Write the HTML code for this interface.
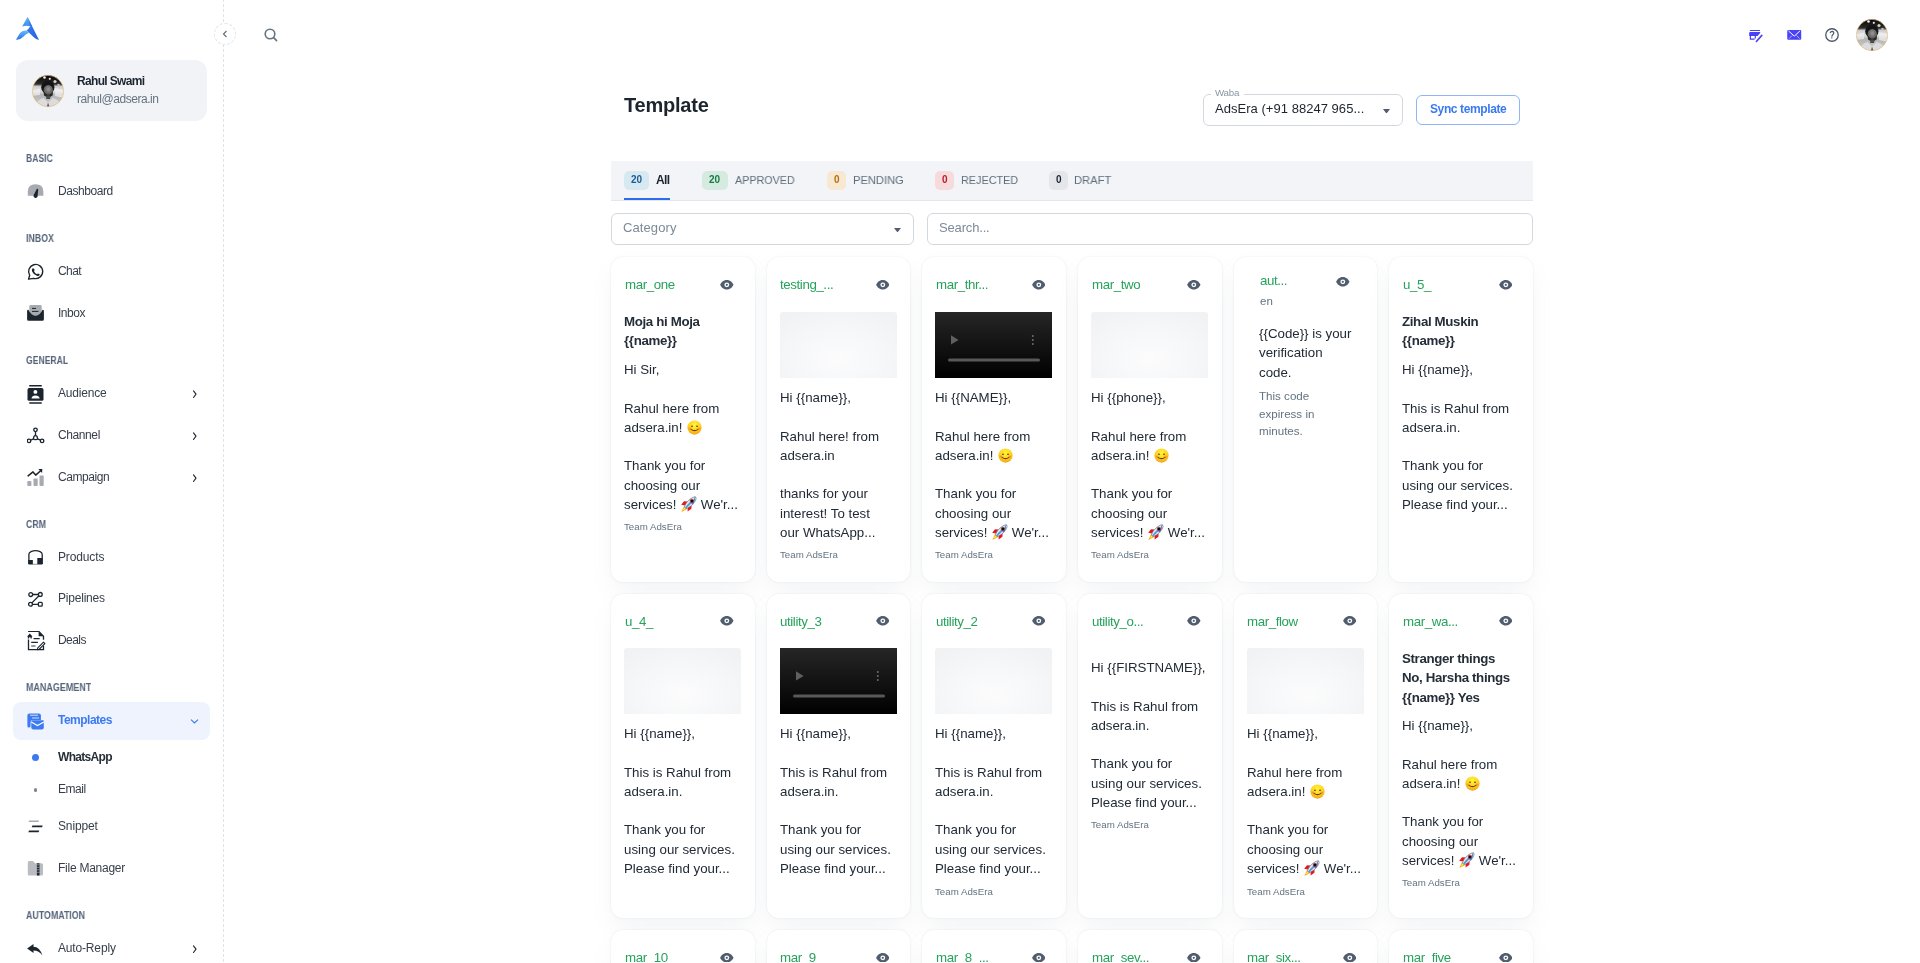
<!DOCTYPE html><html><head><meta charset="utf-8"><style>
*{box-sizing:border-box;margin:0;padding:0}
html,body{width:1920px;height:963px;overflow:hidden;background:#fff;font-family:"Liberation Sans",sans-serif;color:#1C252E}
.a{position:absolute}
.t{position:absolute;white-space:nowrap;will-change:transform}
.card{position:absolute;width:143.67px;background:#fff;border-radius:12px;box-shadow:0 0 2px 0 rgba(145,158,171,0.24),0 12px 24px -4px rgba(145,158,171,0.12)}
.card .t{position:absolute}
.body{position:absolute;white-space:pre;color:#262E38;will-change:transform}
.img{position:absolute;left:13px;width:117px;height:66px;background:radial-gradient(ellipse 70% 80% at 50% 70%,#FCFCFD 0%,#F6F7F8 55%,#F1F2F4 100%);border-radius:3px 3px 0 0}
.vid{position:absolute;left:13px;width:117px;height:66px;background:linear-gradient(#262626,#000)}
.em{display:inline-block;vertical-align:-3px}
svg{display:block}
.em{display:inline-block}
</style></head><body>
<div class="a" style="left:223px;top:-1px;width:1px;height:965px;background:repeating-linear-gradient(to bottom,#DFE3E8 0 3px,transparent 3px 5px)"></div>
<svg class="a" style="left:16px;top:17px" width="24" height="24" viewBox="0 0 24 24">
<defs>
<linearGradient id="lg1" x1="0" y1="0" x2="0" y2="1"><stop offset="0" stop-color="#5DB5F7"/><stop offset="1" stop-color="#3C8CF2"/></linearGradient>
<linearGradient id="lg2" x1="0" y1="0" x2="1" y2="1"><stop offset="0" stop-color="#3A7FEE"/><stop offset="1" stop-color="#2860E6"/></linearGradient>
<linearGradient id="lg3" x1="0" y1="0" x2="0" y2="1"><stop offset="0" stop-color="#66BDF9"/><stop offset="1" stop-color="#2D6EEB"/></linearGradient>
</defs>
<path d="M11.5 0 L6.2 9.5 Q9.5 8.2 14 9.2 L16.3 9.5 Z" fill="url(#lg1)"/>
<path d="M11.5 0 L23 23 Q20 22.5 17.5 20 L10.8 13.5 Q13 11.5 14.3 9.2 Z" fill="url(#lg2)"/>
<path d="M10.8 13.5 Q5.5 13 3 17.5 L0 22.8 Q4 23.2 7 20 Q9.5 17 13 15.8 Z" fill="url(#lg3)"/>
</svg>
<div class="a" style="left:16px;top:60px;width:191px;height:61px;border-radius:12px;background:#F1F3F6"></div>
<svg class="a" style="left:32px;top:75px" width="32" height="32" viewBox="0 0 32 32">
<defs><clipPath id="cav1"><circle cx="16" cy="16" r="15.7"/></clipPath>
<linearGradient id="avbg1" x1="0" y1="0" x2="0" y2="1"><stop offset="0" stop-color="#080808"/><stop offset="0.28" stop-color="#2a2a2a"/><stop offset="0.36" stop-color="#cfcfcf"/><stop offset="0.5" stop-color="#e2e2e2"/><stop offset="0.62" stop-color="#b4b4b4"/><stop offset="1" stop-color="#d0d0d0"/></linearGradient>
<radialGradient id="avf1" cx="0.5" cy="0.4" r="0.6"><stop offset="0" stop-color="#9a9a9a"/><stop offset="1" stop-color="#4a4a4a"/></radialGradient></defs>
<g clip-path="url(#cav1)">
<rect width="32" height="32" fill="url(#avbg1)"/>
<path d="M0 16 L8 13.5 L8 20 L0 21Z" fill="#f0f0f0" opacity="0.7"/><path d="M32 15 L23 13 L23 21 L32 23Z" fill="#f2f2f2" opacity="0.7"/>
<circle cx="12.5" cy="2.5" r="1.3" fill="#f4f4f4"/><circle cx="17.8" cy="3.8" r="1.1" fill="#e8e8e8"/><circle cx="23" cy="6.5" r="1.6" fill="#cfcfcf"/><circle cx="26.5" cy="10" r="1.3" fill="#bdbdbd"/>
<ellipse cx="15.8" cy="12.3" rx="6.6" ry="6.6" fill="#151515"/>
<ellipse cx="16.3" cy="15.3" rx="4.7" ry="5.4" fill="url(#avf1)"/>
<path d="M11.6 16.5 Q16.3 23 21 16.5 L20.6 20.5 Q16.3 24 12 20.5Z" fill="#262626"/>
<rect x="14.2" y="20.5" width="4" height="3.5" fill="#4a4a4a"/>
<path d="M2 32 Q5 25 11.5 23 L16 27.5 L20.8 23 Q27.5 25 31 32 Z" fill="#dcdcdc"/>
<path d="M16 27.5 L14.8 32 L17.6 32Z" fill="#5a5a5a"/>
</g>
<circle cx="16" cy="16" r="15.7" fill="none" stroke="#EDB870" stroke-width="0.6"/>
</svg>
<div class="t" style="left:77.30px;top:73.93px;font-size:12px;line-height:14px;color:#1C252E;font-weight:bold;letter-spacing:-0.670px;">Rahul Swami</div>
<div class="t" style="left:77.30px;top:91.77px;font-size:12px;line-height:14px;color:#637381;letter-spacing:-0.445px;">rahul@adsera.in</div>
<div class="t" style="left:25.80px;top:152.64px;font-size:10px;line-height:12px;color:#56657A;font-weight:bold;transform:scaleX(0.8578);transform-origin:0 0;">BASIC</div>
<div class="t" style="left:25.80px;top:232.89px;font-size:10px;line-height:12px;color:#56657A;font-weight:bold;transform:scaleX(0.8808);transform-origin:0 0;">INBOX</div>
<div class="t" style="left:25.80px;top:354.99px;font-size:10px;line-height:12px;color:#56657A;font-weight:bold;transform:scaleX(0.8630);transform-origin:0 0;">GENERAL</div>
<div class="t" style="left:25.80px;top:518.99px;font-size:10px;line-height:12px;color:#56657A;font-weight:bold;transform:scaleX(0.8782);transform-origin:0 0;">CRM</div>
<div class="t" style="left:25.80px;top:681.69px;font-size:10px;line-height:12px;color:#56657A;font-weight:bold;transform:scaleX(0.8959);transform-origin:0 0;">MANAGEMENT</div>
<div class="t" style="left:25.80px;top:909.99px;font-size:10px;line-height:12px;color:#56657A;font-weight:bold;transform:scaleX(0.8841);transform-origin:0 0;">AUTOMATION</div>
<div class="t" style="left:57.80px;top:183.68px;font-size:12px;line-height:14px;color:#363F4A;letter-spacing:-0.426px;">Dashboard</div>
<div class="t" style="left:57.80px;top:264.18px;font-size:12px;line-height:14px;color:#363F4A;letter-spacing:-0.550px;">Chat</div>
<div class="t" style="left:57.80px;top:305.73px;font-size:12px;line-height:14px;color:#363F4A;letter-spacing:-0.492px;">Inbox</div>
<div class="t" style="left:57.80px;top:385.98px;font-size:12px;line-height:14px;color:#363F4A;letter-spacing:-0.206px;">Audience</div>
<div class="t" style="left:57.80px;top:427.83px;font-size:12px;line-height:14px;color:#363F4A;letter-spacing:-0.400px;">Channel</div>
<div class="t" style="left:57.80px;top:469.98px;font-size:12px;line-height:14px;color:#363F4A;letter-spacing:-0.427px;">Campaign</div>
<div class="t" style="left:57.80px;top:549.98px;font-size:12px;line-height:14px;color:#363F4A;letter-spacing:-0.139px;">Products</div>
<div class="t" style="left:57.80px;top:590.98px;font-size:12px;line-height:14px;color:#363F4A;letter-spacing:-0.211px;">Pipelines</div>
<div class="t" style="left:57.80px;top:632.98px;font-size:12px;line-height:14px;color:#363F4A;letter-spacing:-0.572px;">Deals</div>
<div class="t" style="left:57.80px;top:818.88px;font-size:12px;line-height:14px;color:#363F4A;letter-spacing:-0.135px;">Snippet</div>
<div class="t" style="left:57.80px;top:861.18px;font-size:12px;line-height:14px;color:#363F4A;letter-spacing:-0.256px;">File Manager</div>
<div class="t" style="left:57.80px;top:941.18px;font-size:12px;line-height:14px;color:#363F4A;letter-spacing:-0.163px;">Auto-Reply</div>
<div class="t" style="left:57.80px;top:781.88px;font-size:12px;line-height:14px;color:#363F4A;letter-spacing:-0.475px;">Email</div>
<div class="a" style="left:13px;top:702px;width:197px;height:38px;border-radius:8px;background:#EEF3FD"></div>
<div class="t" style="left:57.80px;top:713.03px;font-size:12px;line-height:14px;color:#3B7AF0;font-weight:bold;letter-spacing:-0.509px;">Templates</div>
<div class="t" style="left:57.80px;top:750.13px;font-size:12px;line-height:14px;color:#262F39;font-weight:bold;letter-spacing:-0.691px;">WhatsApp</div>
<div class="a" style="left:31.9px;top:753.9px;width:7px;height:7px;border-radius:50%;background:#3B7AF0"></div>
<div class="a" style="left:33.6px;top:788.1px;width:3.6px;height:3.6px;border-radius:50%;background:#7A8593"></div>

<svg class="a" style="left:27px;top:183px" width="18" height="16" viewBox="0 0 18 16"><path d="M0.8 12.8 V8.4 Q0.8 1.2 8.55 1.2 Q16.35 1.2 16.35 8.4 V12.8 Z" fill="#A7AAB0"/><path d="M9.9 5.8 L11.2 6.1 L10.7 12.6 A2.1 2.1 0 1 1 6.7 12 Z" fill="#1C252E"/></svg>
<svg class="a" style="left:27px;top:263px" width="18" height="18" viewBox="0 0 18 18"><path d="M2.7 12.3 L1.5 16.2 L6.7 15.3 A7.05 7.05 0 1 0 2.7 12.3 Z" fill="none" stroke="#1C252E" stroke-width="1.35" stroke-linejoin="round"/><path d="M5.3 5.6 Q4.5 6.5 5.1 8.4 Q6.4 11.7 10.3 12.9 Q12 13.3 12.6 12.1 L12.5 11.1 L10.9 10.4 L10.1 11.2 Q7.8 10.4 6.9 8.1 L7.7 7.2 L7 5.5 Z" fill="#1C252E"/></svg>
<svg class="a" style="left:27px;top:305px" width="18" height="17" viewBox="0 0 18 17"><path d="M3.6 0.1 H13.4 Q14.7 0.1 14.7 1.4 V10 H2.3 V1.4 Q2.3 0.1 3.6 0.1Z" fill="#A7AAB0"/><rect x="5" y="2.9" width="4" height="1" fill="#1C252E"/><rect x="5" y="5.9" width="6.5" height="1" fill="#1C252E"/><path d="M0.1 6 Q0.1 4.7 1.4 4.7 Q4.2 10.6 8.5 10.6 Q12.8 10.6 15.6 4.7 Q16.9 4.7 16.9 6 V14.3 Q16.9 15.8 15.4 15.8 H1.6 Q0.1 15.8 0.1 14.3 Z" fill="#1C252E"/></svg>
<svg class="a" style="left:27px;top:384px" width="18" height="21" viewBox="0 0 18 21"><rect x="2.1" y="1.1" width="12.8" height="1.4" rx="0.6" fill="#1C252E"/><rect x="2.1" y="18.2" width="12.8" height="1.5" rx="0.6" fill="#1C252E"/><rect x="0.5" y="4.1" width="16" height="12.7" rx="1.6" fill="#1C252E"/><circle cx="8.4" cy="7.9" r="1.95" fill="#fff"/><path d="M4.5 14.5 Q4.9 11.6 8.4 11.6 Q12.2 11.6 12.7 14.5Z" fill="#fff"/></svg>
<svg class="a" style="left:27px;top:427px" width="18" height="17" viewBox="0 0 18 17"><g fill="none" stroke="#1C252E" stroke-width="1.35"><circle cx="8.5" cy="2.8" r="1.75"/><circle cx="2" cy="13.9" r="1.75"/><circle cx="15.1" cy="13.9" r="1.75"/><path d="M8.5 4.6 V8.6 M3.6 13.1 L6.6 11.9 M13.5 13.1 L10.4 11.9"/><path d="M8.5 8.6 Q7.3 8.6 6.9 9.6 L6.5 11.4 Q6.5 12.6 8.5 12.6 Q10.5 12.6 10.5 11.4 L10.1 9.6 Q9.7 8.6 8.5 8.6Z"/></g></svg>
<svg class="a" style="left:27px;top:468px" width="18" height="19" viewBox="0 0 18 19"><rect x="0.3" y="13" width="4.1" height="5" rx="0.9" fill="#A7AAB0"/><rect x="6.5" y="10.5" width="4.2" height="7.5" rx="0.9" fill="#A7AAB0"/><rect x="12.5" y="7.5" width="4.2" height="10.5" rx="0.9" fill="#A7AAB0"/><path d="M1.1 7.9 L6 3.9 L8.7 7.1 L14.2 2.2" fill="none" stroke="#1C252E" stroke-width="1.5" stroke-linejoin="round" stroke-linecap="round"/><path d="M11.3 1.1 L15.3 1 L15.1 4.9Z" fill="#1C252E"/></svg>
<svg class="a" style="left:27px;top:549px" width="18" height="17" viewBox="0 0 18 17"><path d="M1.9 15 V5.2 Q1.9 3.6 4 2.6 Q8.5 0.5 13.1 2.6 Q15.2 3.6 15.2 5.2 V15" fill="none" stroke="#1C252E" stroke-width="1.3"/><rect x="1.25" y="11" width="4.6" height="4.2" fill="#1C252E"/><rect x="10.3" y="9" width="5.2" height="6.2" fill="#1C252E"/><path d="M1.8 15.3 H15.2" stroke="#1C252E" stroke-width="0.8" opacity="0.6"/></svg>
<svg class="a" style="left:27px;top:590px" width="18" height="18" viewBox="0 0 18 18"><g fill="none" stroke="#1C252E" stroke-width="1.3"><circle cx="3.7" cy="4.6" r="1.9"/><circle cx="13.3" cy="4.4" r="1.9"/><circle cx="3.5" cy="14.3" r="1.9"/><rect x="11.4" y="12.4" width="3.8" height="3.8" rx="0.9"/><path d="M5.6 4.5 H11.4 M12 5.8 L4.9 12.9 M5.4 14.3 H11.4"/></g></svg>
<svg class="a" style="left:27px;top:631px" width="19" height="20" viewBox="0 0 19 20"><path d="M1.5 8.6 V18.6 H16.5 V15 M16.5 8.8 V5.2 L11.8 0.4 H1.1" fill="none" stroke="#1C252E" stroke-width="1.3"/><path d="M11.6 0.4 L16.6 5.3 L11.6 5.3Z" fill="#1C252E"/><path d="M0.1 5.6 L2.8 2.5 L5.5 5.6 H4.8 V7.6 H3.5 V6.2 H2.1 V7.6 H0.8 V5.6Z" fill="#1C252E"/><path d="M6.6 7.6 H12.7 M4.2 11.4 H10.9" stroke="#1C252E" stroke-width="1.2"/><path d="M4.2 15 H8.5" stroke="#6A7078" stroke-width="1.4"/><path d="M10.6 17.2 L16.5 11.2 L17.9 12.6 L12 18.5 L10.4 18.7 Z" fill="none" stroke="#1C252E" stroke-width="1.1" stroke-linejoin="round"/></svg>
<svg class="a" style="left:27px;top:713px" width="18" height="18" viewBox="0 0 18 18"><path d="M0.4 2.4 Q0.4 0.4 2.4 0.4 H11.9 Q13.9 0.4 13.9 2.4 V7 H5.3 Q3.6 7 3.6 8.7 V13 Q3.6 14.6 2 14.6 Q0.4 14.6 0.4 13 Z" fill="#3D7AF0"/><path d="M3 2.2 H11 M5 5 H12" stroke="#fff" stroke-width="0.9" opacity="0.85"/><path d="M4.3 8 Q4.3 7.2 5.1 7.2 H16 Q16.8 7.2 16.8 8 V14.5 Q16.8 16.5 14.8 16.5 H6.3 Q4.3 16.5 4.3 14.5 Z" fill="#3D7AF0"/><path d="M4.3 9 L10.5 12.6 L16.8 9" fill="none" stroke="#fff" stroke-width="1.1"/></svg>
<svg class="a" style="left:190px;top:718px" width="9" height="7" viewBox="0 0 9 7"><path d="M1 1.7 L4.5 5 L8 1.7" fill="none" stroke="#3B7AF0" stroke-width="1.15"/></svg>
<svg class="a" style="left:27px;top:818px" width="18" height="16" viewBox="0 0 18 16"><path d="M2.2 2.5 H12.1 L11.4 4.1 H1.5Z" fill="#A7AAB0"/><path d="M5.4 7.5 H15.7 L15 9.3 H4.7Z" fill="#1C252E"/><path d="M2 12.4 H12.3 L11.6 14.2 H1.3Z" fill="#1C252E"/></svg>
<svg class="a" style="left:27px;top:860px" width="18" height="17" viewBox="0 0 18 17"><path d="M0.8 2.5 Q0.8 1 2.3 1 H6 L8 3.3 H14.5 Q16 3.3 16 4.8 V14 Q16 15.5 14.5 15.5 H2.3 Q0.8 15.5 0.8 14Z" fill="#B9BCC1"/><rect x="9.9" y="3.3" width="2.6" height="12.2" fill="#1C252E"/><path d="M9.9 4.8 H12.5 M9.9 7.3 H12.5 M9.9 9.8 H12.5 M9.9 12.3 H12.5" stroke="#B9BCC1" stroke-width="0.7"/></svg>
<svg class="a" style="left:27px;top:940px" width="18" height="17" viewBox="0 0 18 17"><path d="M0.1 8.4 L6.5 3.9 V6.8 Q12.8 7 15.4 15.5 Q12 10.6 6.5 10.6 V12.9 Z" fill="#1C252E"/></svg>

<svg class="a" style="left:190px;top:389px" width="10" height="10" viewBox="0 0 10 10"><path d="M3.5 1.9 L6 5.2 L3.5 8.5" fill="none" stroke="#1C252E" stroke-width="1.1" stroke-linecap="round" stroke-linejoin="round"/></svg>
<svg class="a" style="left:190px;top:431px" width="10" height="10" viewBox="0 0 10 10"><path d="M3.5 1.9 L6 5.2 L3.5 8.5" fill="none" stroke="#1C252E" stroke-width="1.1" stroke-linecap="round" stroke-linejoin="round"/></svg>
<svg class="a" style="left:190px;top:473px" width="10" height="10" viewBox="0 0 10 10"><path d="M3.5 1.9 L6 5.2 L3.5 8.5" fill="none" stroke="#1C252E" stroke-width="1.1" stroke-linecap="round" stroke-linejoin="round"/></svg>
<svg class="a" style="left:190px;top:944px" width="10" height="10" viewBox="0 0 10 10"><path d="M3.5 1.9 L6 5.2 L3.5 8.5" fill="none" stroke="#1C252E" stroke-width="1.1" stroke-linecap="round" stroke-linejoin="round"/></svg>
<div class="a" style="left:214px;top:23px;width:22px;height:22px;border-radius:50%;border:1px dashed #E3E6EA;background:#fff"></div>
<svg class="a" style="left:221px;top:30px" width="8" height="8" viewBox="0 0 8 8"><path d="M5.5 1 L2.5 4 L5.5 7" fill="none" stroke="#637381" stroke-width="1.2"/></svg>
<svg class="a" style="left:264px;top:28px" width="14" height="14" viewBox="0 0 14 14"><circle cx="6" cy="6" r="4.8" fill="none" stroke="#637381" stroke-width="1.6"/><path d="M9.6 9.6 L12.6 12.6" stroke="#637381" stroke-width="1.6" stroke-linecap="round"/></svg>
<svg class="a" style="left:1748px;top:28px" width="16" height="15" viewBox="0 0 16 15"><rect x="1.8" y="1.9" width="10.3" height="1.1" rx="0.5" fill="#4841F6"/><path d="M2.2 4 H11.6 Q12.7 4 12.2 5 L9.6 7.9 H1.2 V5 Q1.2 4 2.2 4Z" fill="#4841F6"/><path d="M2.4 7.8 V11.2 H6.6 M7.3 7.8 V10.4" fill="none" stroke="#4841F6" stroke-width="1.2"/><path d="M8.4 13.5 L13.8 7.4" stroke="#4841F6" stroke-width="1.6" stroke-linecap="round"/></svg>
<svg class="a" style="left:1787px;top:29px" width="15" height="12" viewBox="0 0 15 12"><rect x="0.25" y="0.9" width="13.95" height="9.85" rx="1.1" fill="#4841F6"/><path d="M1.5 2 L7.3 7.1 L12.9 2" fill="none" stroke="#fff" stroke-width="1"/><path d="M2 9.6 L5.2 6.4 M12.6 9.6 L9.4 6.4" stroke="#fff" stroke-width="0.75" opacity="0.8"/></svg>
<svg class="a" style="left:1824px;top:28px" width="16" height="15" viewBox="0 0 16 15"><circle cx="8" cy="7" r="6.25" fill="none" stroke="#4A5866" stroke-width="1.3"/><path d="M6.3 4.7 Q6.6 3.3 8.2 3.3 Q9.8 3.4 9.8 4.9 Q9.8 6 8.4 7 L7.9 8.2" fill="none" stroke="#4A5866" stroke-width="1.2" stroke-linecap="round"/><circle cx="7.8" cy="9.9" r="0.7" fill="#4A5866"/></svg>
<svg class="a" style="left:1856px;top:19px" width="32" height="32" viewBox="0 0 32 32">
<defs><clipPath id="cav2"><circle cx="16" cy="16" r="15.7"/></clipPath>
<linearGradient id="avbg2" x1="0" y1="0" x2="0" y2="1"><stop offset="0" stop-color="#080808"/><stop offset="0.28" stop-color="#2a2a2a"/><stop offset="0.36" stop-color="#cfcfcf"/><stop offset="0.5" stop-color="#e2e2e2"/><stop offset="0.62" stop-color="#b4b4b4"/><stop offset="1" stop-color="#d0d0d0"/></linearGradient>
<radialGradient id="avf2" cx="0.5" cy="0.4" r="0.6"><stop offset="0" stop-color="#9a9a9a"/><stop offset="1" stop-color="#4a4a4a"/></radialGradient></defs>
<g clip-path="url(#cav2)">
<rect width="32" height="32" fill="url(#avbg2)"/>
<path d="M0 16 L8 13.5 L8 20 L0 21Z" fill="#f0f0f0" opacity="0.7"/><path d="M32 15 L23 13 L23 21 L32 23Z" fill="#f2f2f2" opacity="0.7"/>
<circle cx="12.5" cy="2.5" r="1.3" fill="#f4f4f4"/><circle cx="17.8" cy="3.8" r="1.1" fill="#e8e8e8"/><circle cx="23" cy="6.5" r="1.6" fill="#cfcfcf"/><circle cx="26.5" cy="10" r="1.3" fill="#bdbdbd"/>
<ellipse cx="15.8" cy="12.3" rx="6.6" ry="6.6" fill="#151515"/>
<ellipse cx="16.3" cy="15.3" rx="4.7" ry="5.4" fill="url(#avf2)"/>
<path d="M11.6 16.5 Q16.3 23 21 16.5 L20.6 20.5 Q16.3 24 12 20.5Z" fill="#262626"/>
<rect x="14.2" y="20.5" width="4" height="3.5" fill="#4a4a4a"/>
<path d="M2 32 Q5 25 11.5 23 L16 27.5 L20.8 23 Q27.5 25 31 32 Z" fill="#dcdcdc"/>
<path d="M16 27.5 L14.8 32 L17.6 32Z" fill="#5a5a5a"/>
</g>
<circle cx="16" cy="16" r="15.7" fill="none" stroke="#EDB870" stroke-width="0.6"/>
</svg>
<div class="t" style="left:624.25px;top:92.97px;font-size:20px;line-height:24px;color:#1C252E;font-weight:bold;letter-spacing:-0.214px;">Template</div>
<div class="a" style="left:1203px;top:94px;width:200px;height:31.5px;border:1px solid #D3D8DE;border-radius:6px"></div>
<div class="a" style="left:1211px;top:90px;width:33px;height:8px;background:#fff"></div>
<div class="t" style="left:1214.60px;top:87.44px;font-size:9.75px;line-height:12px;color:#8A96A3;letter-spacing:-0.244px;">Waba</div>
<div class="t" style="left:1215.10px;top:101.33px;font-size:13px;line-height:16px;color:#1C252E;letter-spacing:0.034px;">AdsEra (+91 88247 965...</div>
<svg class="a" style="left:1383px;top:108.5px" width="7" height="4.6" viewBox="0 0 7 4.6"><path d="M0 0 L7 0 L3.5 4.6Z" fill="#4F5D6E"/></svg>
<div class="a" style="left:1416px;top:95px;width:104px;height:29.5px;border:1px solid #8FB5F6;border-radius:6px"></div>
<div class="t" style="left:1429.75px;top:101.88px;font-size:12px;line-height:14px;color:#3B7AF0;font-weight:bold;letter-spacing:-0.384px;">Sync template</div>
<div class="a" style="left:611px;top:161px;width:922px;height:39.5px;background:#F3F4F7"></div>
<div class="a" style="left:611px;top:200px;width:922px;height:1px;background:#E3E6EA"></div>
<div class="a" style="left:624px;top:198px;width:46px;height:2px;background:#2F6BEF"></div>
<div class="a" style="left:624.2px;top:171px;width:24.7px;height:19px;border-radius:5px;background:#D6E9F1"></div>
<div class="t" style="left:630.99px;top:173.69px;font-size:10px;line-height:12px;color:#1F5B97;font-weight:bold;">20</div>
<div class="t" style="left:656.00px;top:172.98px;font-size:12px;line-height:14px;color:#1C252E;font-weight:bold;letter-spacing:-0.665px;">All</div>
<div class="a" style="left:702.3px;top:171px;width:25.5px;height:19px;border-radius:5px;background:#D5EBDF"></div>
<div class="t" style="left:709.49px;top:173.69px;font-size:10px;line-height:12px;color:#1A7A4A;font-weight:bold;">20</div>
<div class="t" style="left:734.60px;top:173.28px;font-size:11.6px;line-height:14px;color:#5F6E7D;transform:scaleX(0.9276);transform-origin:0 0;">APPROVED</div>
<div class="a" style="left:827.3px;top:171px;width:18.6px;height:19px;border-radius:5px;background:#F7E8D2"></div>
<div class="t" style="left:833.82px;top:173.69px;font-size:10px;line-height:12px;color:#B76E12;font-weight:bold;">0</div>
<div class="t" style="left:852.50px;top:173.28px;font-size:11.6px;line-height:14px;color:#5F6E7D;transform:scaleX(0.9609);transform-origin:0 0;">PENDING</div>
<div class="a" style="left:935.0px;top:171px;width:18.9px;height:19px;border-radius:5px;background:#F7DADC"></div>
<div class="t" style="left:941.68px;top:173.69px;font-size:10px;line-height:12px;color:#B71D2F;font-weight:bold;">0</div>
<div class="t" style="left:961.40px;top:173.28px;font-size:11.6px;line-height:14px;color:#5F6E7D;transform:scaleX(0.9344);transform-origin:0 0;">REJECTED</div>
<div class="a" style="left:1049.25px;top:171px;width:18.5px;height:19px;border-radius:5px;background:#E4E6EA"></div>
<div class="t" style="left:1055.70px;top:173.69px;font-size:10px;line-height:12px;color:#1C252E;font-weight:bold;">0</div>
<div class="t" style="left:1074.40px;top:173.28px;font-size:11.6px;line-height:14px;color:#5F6E7D;transform:scaleX(0.9662);transform-origin:0 0;">DRAFT</div>
<div class="a" style="left:611px;top:213px;width:303px;height:32px;border:1px solid #D3D8DE;border-radius:6px"></div>
<div class="t" style="left:623.00px;top:220.28px;font-size:13px;line-height:16px;color:#7D8A98;letter-spacing:0.093px;">Category</div>
<svg class="a" style="left:894px;top:227.5px" width="7" height="4.4" viewBox="0 0 7 4.4"><path d="M0 0 L7 0 L3.5 4.4Z" fill="#4F5D6E"/></svg>
<div class="a" style="left:927px;top:213px;width:606px;height:32px;border:1px solid #D3D8DE;border-radius:6px"></div>
<div class="t" style="left:938.90px;top:220.33px;font-size:13px;line-height:16px;color:#7D8A98;letter-spacing:-0.167px;">Search...</div>
<div class="card" style="left:611.00px;top:257.3px;height:324.6px"><div class="t" style="left:13.50px;top:19.92px;font-size:13.3px;line-height:16px;color:#26A35B;letter-spacing:-0.4px">mar_one</div><svg class="a" style="left:109.20px;top:22.70px" width="13.6" height="9.7" viewBox="0 0 14 10"><path d="M7 0.1 C3.4 0.1 1 2.9 0.1 5 C1 7.1 3.4 9.9 7 9.9 C10.6 9.9 13 7.1 13.9 5 C13 2.9 10.6 0.1 7 0.1Z" fill="#4F5D6E"/><circle cx="7" cy="5" r="2.5" fill="#fff"/><circle cx="7" cy="5" r="1.15" fill="#4F5D6E"/></svg><div class="body" style="left:12.7px;top:54.86px;font-size:13.3px;line-height:19.25px;color:#252E38;font-weight:bold;letter-spacing:-0.35px;">Moja hi Moja
{{name}}</div><div class="body" style="left:13.0px;top:102.71px;font-size:13.3px;line-height:19.25px;color:#212B36;">Hi Sir,

Rahul here from
adsera.in! <svg class="em" style="vertical-align:-3.1px;margin-left:0.5px" width="15" height="15" viewBox="0 0 16 16"><defs><radialGradient id="SM1" cx="0.5" cy="0.3" r="0.75"><stop offset="0" stop-color="#FFF53A"/><stop offset="0.55" stop-color="#FDD21F"/><stop offset="1" stop-color="#F39A12"/></radialGradient></defs><circle cx="8" cy="8" r="7.6" fill="url(#SM1)"/><ellipse cx="5.3" cy="6.6" rx="1.05" ry="0.8" fill="#6E3A0C"/><ellipse cx="10.7" cy="6.6" rx="1.05" ry="0.8" fill="#6E3A0C"/><path d="M4.3 10 Q8 12.8 11.7 10" fill="none" stroke="#6E3A0C" stroke-width="1.2" stroke-linecap="round"/><ellipse cx="3.2" cy="9" rx="1.6" ry="1.1" fill="#F57A1F" opacity="0.6"/><ellipse cx="12.8" cy="9" rx="1.6" ry="1.1" fill="#F57A1F" opacity="0.6"/></svg>

Thank you for
choosing our
services! <svg class="em" style="vertical-align:-3.6px;margin-left:0.5px;margin-right:0.5px" width="16" height="16" viewBox="0 0 16 16"><path d="M0.3 16 L3.2 9.8 L6.6 12.8Z" fill="#F7A21A"/><path d="M1.6 14.6 L3.4 11 L5.2 12.6Z" fill="#FFF23A"/><path d="M0.2 8.8 L3 5.2 L6.8 5.4 L4.2 9.4Z" fill="#E8141E"/><path d="M6.6 15.4 L10.4 12.8 L10.6 9.2 L6.6 11.8Z" fill="#E8141E"/><ellipse cx="9.4" cy="6.6" rx="7.6" ry="2.8" transform="rotate(-45 9.4 6.6)" fill="#E4ECF2" stroke="#5E6B78" stroke-width="0.6"/><path d="M15.8 0.3 Q15.9 4.5 11.6 9 L13.5 10.5 Q16.5 6 15.8 0.3Z" fill="#3C7FD0" transform="translate(-1.6 -1.8)"/><path d="M4.3 11.6 Q5.5 9 9.6 5.2 L11 6.6 Q7.5 10.6 5.1 12.4Z" fill="#3F86D6" opacity="0.85"/><circle cx="10.9" cy="4.9" r="1.75" fill="#0D0D12" stroke="#C9303A" stroke-width="0.7"/></svg> We'r...</div><div class="t" style="left:13.10px;top:264.19px;font-size:9.7px;line-height:12px;color:#637381;transform:scaleX(1.0032);transform-origin:0 0;">Team AdsEra</div></div>
<div class="card" style="left:766.67px;top:257.3px;height:324.6px"><div class="t" style="left:13.50px;top:19.92px;font-size:13.3px;line-height:16px;color:#26A35B;letter-spacing:-0.4px">testing_...</div><svg class="a" style="left:109.20px;top:22.70px" width="13.6" height="9.7" viewBox="0 0 14 10"><path d="M7 0.1 C3.4 0.1 1 2.9 0.1 5 C1 7.1 3.4 9.9 7 9.9 C10.6 9.9 13 7.1 13.9 5 C13 2.9 10.6 0.1 7 0.1Z" fill="#4F5D6E"/><circle cx="7" cy="5" r="2.5" fill="#fff"/><circle cx="7" cy="5" r="1.15" fill="#4F5D6E"/></svg><div class="img" style="top:54.8px"></div><div class="body" style="left:13.0px;top:130.46px;font-size:13.3px;line-height:19.25px;color:#212B36;">Hi {{name}},

Rahul here! from
adsera.in

thanks for your
interest! To test
our WhatsApp...</div><div class="t" style="left:13.10px;top:291.94px;font-size:9.7px;line-height:12px;color:#637381;transform:scaleX(1.0032);transform-origin:0 0;">Team AdsEra</div></div>
<div class="card" style="left:922.34px;top:257.3px;height:324.6px"><div class="t" style="left:13.50px;top:19.92px;font-size:13.3px;line-height:16px;color:#26A35B;letter-spacing:-0.4px">mar_thr...</div><svg class="a" style="left:109.20px;top:22.70px" width="13.6" height="9.7" viewBox="0 0 14 10"><path d="M7 0.1 C3.4 0.1 1 2.9 0.1 5 C1 7.1 3.4 9.9 7 9.9 C10.6 9.9 13 7.1 13.9 5 C13 2.9 10.6 0.1 7 0.1Z" fill="#4F5D6E"/><circle cx="7" cy="5" r="2.5" fill="#fff"/><circle cx="7" cy="5" r="1.15" fill="#4F5D6E"/></svg><div class="vid" style="top:54.8px"><svg width="117" height="66" viewBox="0 0 117 66"><path d="M16 23.3 L23.5 28 L16 32.6Z" fill="#606060"/><circle cx="97.8" cy="24" r="0.95" fill="#707070"/><circle cx="97.8" cy="28" r="0.95" fill="#707070"/><circle cx="97.8" cy="32" r="0.95" fill="#707070"/><rect x="13" y="46.5" width="92" height="3" rx="1.5" fill="#585858"/></svg></div><div class="body" style="left:13.0px;top:130.46px;font-size:13.3px;line-height:19.25px;color:#212B36;">Hi {{NAME}},

Rahul here from
adsera.in! <svg class="em" style="vertical-align:-3.1px;margin-left:0.5px" width="15" height="15" viewBox="0 0 16 16"><defs><radialGradient id="SM2" cx="0.5" cy="0.3" r="0.75"><stop offset="0" stop-color="#FFF53A"/><stop offset="0.55" stop-color="#FDD21F"/><stop offset="1" stop-color="#F39A12"/></radialGradient></defs><circle cx="8" cy="8" r="7.6" fill="url(#SM2)"/><ellipse cx="5.3" cy="6.6" rx="1.05" ry="0.8" fill="#6E3A0C"/><ellipse cx="10.7" cy="6.6" rx="1.05" ry="0.8" fill="#6E3A0C"/><path d="M4.3 10 Q8 12.8 11.7 10" fill="none" stroke="#6E3A0C" stroke-width="1.2" stroke-linecap="round"/><ellipse cx="3.2" cy="9" rx="1.6" ry="1.1" fill="#F57A1F" opacity="0.6"/><ellipse cx="12.8" cy="9" rx="1.6" ry="1.1" fill="#F57A1F" opacity="0.6"/></svg>

Thank you for
choosing our
services! <svg class="em" style="vertical-align:-3.6px;margin-left:0.5px;margin-right:0.5px" width="16" height="16" viewBox="0 0 16 16"><path d="M0.3 16 L3.2 9.8 L6.6 12.8Z" fill="#F7A21A"/><path d="M1.6 14.6 L3.4 11 L5.2 12.6Z" fill="#FFF23A"/><path d="M0.2 8.8 L3 5.2 L6.8 5.4 L4.2 9.4Z" fill="#E8141E"/><path d="M6.6 15.4 L10.4 12.8 L10.6 9.2 L6.6 11.8Z" fill="#E8141E"/><ellipse cx="9.4" cy="6.6" rx="7.6" ry="2.8" transform="rotate(-45 9.4 6.6)" fill="#E4ECF2" stroke="#5E6B78" stroke-width="0.6"/><path d="M15.8 0.3 Q15.9 4.5 11.6 9 L13.5 10.5 Q16.5 6 15.8 0.3Z" fill="#3C7FD0" transform="translate(-1.6 -1.8)"/><path d="M4.3 11.6 Q5.5 9 9.6 5.2 L11 6.6 Q7.5 10.6 5.1 12.4Z" fill="#3F86D6" opacity="0.85"/><circle cx="10.9" cy="4.9" r="1.75" fill="#0D0D12" stroke="#C9303A" stroke-width="0.7"/></svg> We'r...</div><div class="t" style="left:13.10px;top:291.94px;font-size:9.7px;line-height:12px;color:#637381;transform:scaleX(1.0032);transform-origin:0 0;">Team AdsEra</div></div>
<div class="card" style="left:1078.01px;top:257.3px;height:324.6px"><div class="t" style="left:13.50px;top:19.92px;font-size:13.3px;line-height:16px;color:#26A35B;letter-spacing:-0.4px">mar_two</div><svg class="a" style="left:109.20px;top:22.70px" width="13.6" height="9.7" viewBox="0 0 14 10"><path d="M7 0.1 C3.4 0.1 1 2.9 0.1 5 C1 7.1 3.4 9.9 7 9.9 C10.6 9.9 13 7.1 13.9 5 C13 2.9 10.6 0.1 7 0.1Z" fill="#4F5D6E"/><circle cx="7" cy="5" r="2.5" fill="#fff"/><circle cx="7" cy="5" r="1.15" fill="#4F5D6E"/></svg><div class="img" style="top:54.8px"></div><div class="body" style="left:13.0px;top:130.46px;font-size:13.3px;line-height:19.25px;color:#212B36;">Hi {{phone}},

Rahul here from
adsera.in! <svg class="em" style="vertical-align:-3.1px;margin-left:0.5px" width="15" height="15" viewBox="0 0 16 16"><defs><radialGradient id="SM3" cx="0.5" cy="0.3" r="0.75"><stop offset="0" stop-color="#FFF53A"/><stop offset="0.55" stop-color="#FDD21F"/><stop offset="1" stop-color="#F39A12"/></radialGradient></defs><circle cx="8" cy="8" r="7.6" fill="url(#SM3)"/><ellipse cx="5.3" cy="6.6" rx="1.05" ry="0.8" fill="#6E3A0C"/><ellipse cx="10.7" cy="6.6" rx="1.05" ry="0.8" fill="#6E3A0C"/><path d="M4.3 10 Q8 12.8 11.7 10" fill="none" stroke="#6E3A0C" stroke-width="1.2" stroke-linecap="round"/><ellipse cx="3.2" cy="9" rx="1.6" ry="1.1" fill="#F57A1F" opacity="0.6"/><ellipse cx="12.8" cy="9" rx="1.6" ry="1.1" fill="#F57A1F" opacity="0.6"/></svg>

Thank you for
choosing our
services! <svg class="em" style="vertical-align:-3.6px;margin-left:0.5px;margin-right:0.5px" width="16" height="16" viewBox="0 0 16 16"><path d="M0.3 16 L3.2 9.8 L6.6 12.8Z" fill="#F7A21A"/><path d="M1.6 14.6 L3.4 11 L5.2 12.6Z" fill="#FFF23A"/><path d="M0.2 8.8 L3 5.2 L6.8 5.4 L4.2 9.4Z" fill="#E8141E"/><path d="M6.6 15.4 L10.4 12.8 L10.6 9.2 L6.6 11.8Z" fill="#E8141E"/><ellipse cx="9.4" cy="6.6" rx="7.6" ry="2.8" transform="rotate(-45 9.4 6.6)" fill="#E4ECF2" stroke="#5E6B78" stroke-width="0.6"/><path d="M15.8 0.3 Q15.9 4.5 11.6 9 L13.5 10.5 Q16.5 6 15.8 0.3Z" fill="#3C7FD0" transform="translate(-1.6 -1.8)"/><path d="M4.3 11.6 Q5.5 9 9.6 5.2 L11 6.6 Q7.5 10.6 5.1 12.4Z" fill="#3F86D6" opacity="0.85"/><circle cx="10.9" cy="4.9" r="1.75" fill="#0D0D12" stroke="#C9303A" stroke-width="0.7"/></svg> We'r...</div><div class="t" style="left:13.10px;top:291.94px;font-size:9.7px;line-height:12px;color:#637381;transform:scaleX(1.0032);transform-origin:0 0;">Team AdsEra</div></div>
<div class="card" style="left:1233.68px;top:257.3px;height:324.6px"><div class="t" style="left:26.30px;top:15.52px;font-size:13.3px;line-height:16px;color:#26A35B;letter-spacing:-0.4px">aut...</div><svg class="a" style="left:102.50px;top:19.85px" width="13.6" height="9.7" viewBox="0 0 14 10"><path d="M7 0.1 C3.4 0.1 1 2.9 0.1 5 C1 7.1 3.4 9.9 7 9.9 C10.6 9.9 13 7.1 13.9 5 C13 2.9 10.6 0.1 7 0.1Z" fill="#4F5D6E"/><circle cx="7" cy="5" r="2.5" fill="#fff"/><circle cx="7" cy="5" r="1.15" fill="#4F5D6E"/></svg><div class="t" style="left:26.30px;top:36.41px;font-size:11.5px;line-height:14px;color:#637381;">en</div><div class="body" style="left:25.6px;top:66.26px;font-size:13.3px;line-height:19.25px;color:#212B36;">{{Code}} is your
verification
code.</div><div class="body" style="left:25.5px;top:129.93px;font-size:11.6px;line-height:17.5px;color:#637381;">This code
expiress in
minutes.</div></div>
<div class="card" style="left:1389.35px;top:257.3px;height:324.6px"><div class="t" style="left:13.50px;top:19.92px;font-size:13.3px;line-height:16px;color:#26A35B;letter-spacing:-0.4px">u_5_</div><svg class="a" style="left:109.20px;top:22.70px" width="13.6" height="9.7" viewBox="0 0 14 10"><path d="M7 0.1 C3.4 0.1 1 2.9 0.1 5 C1 7.1 3.4 9.9 7 9.9 C10.6 9.9 13 7.1 13.9 5 C13 2.9 10.6 0.1 7 0.1Z" fill="#4F5D6E"/><circle cx="7" cy="5" r="2.5" fill="#fff"/><circle cx="7" cy="5" r="1.15" fill="#4F5D6E"/></svg><div class="body" style="left:12.7px;top:54.86px;font-size:13.3px;line-height:19.25px;color:#252E38;font-weight:bold;letter-spacing:-0.35px;">Zihal Muskin
{{name}}</div><div class="body" style="left:13.0px;top:102.71px;font-size:13.3px;line-height:19.25px;color:#212B36;">Hi {{name}},

This is Rahul from
adsera.in.

Thank you for
using our services.
Please find your...</div></div>
<div class="card" style="left:611.00px;top:593.7px;height:324.6px"><div class="t" style="left:13.50px;top:19.92px;font-size:13.3px;line-height:16px;color:#26A35B;letter-spacing:-0.4px">u_4_</div><svg class="a" style="left:109.20px;top:22.70px" width="13.6" height="9.7" viewBox="0 0 14 10"><path d="M7 0.1 C3.4 0.1 1 2.9 0.1 5 C1 7.1 3.4 9.9 7 9.9 C10.6 9.9 13 7.1 13.9 5 C13 2.9 10.6 0.1 7 0.1Z" fill="#4F5D6E"/><circle cx="7" cy="5" r="2.5" fill="#fff"/><circle cx="7" cy="5" r="1.15" fill="#4F5D6E"/></svg><div class="img" style="top:54.8px"></div><div class="body" style="left:13.0px;top:130.46px;font-size:13.3px;line-height:19.25px;color:#212B36;">Hi {{name}},

This is Rahul from
adsera.in.

Thank you for
using our services.
Please find your...</div></div>
<div class="card" style="left:766.67px;top:593.7px;height:324.6px"><div class="t" style="left:13.50px;top:19.92px;font-size:13.3px;line-height:16px;color:#26A35B;letter-spacing:-0.4px">utility_3</div><svg class="a" style="left:109.20px;top:22.70px" width="13.6" height="9.7" viewBox="0 0 14 10"><path d="M7 0.1 C3.4 0.1 1 2.9 0.1 5 C1 7.1 3.4 9.9 7 9.9 C10.6 9.9 13 7.1 13.9 5 C13 2.9 10.6 0.1 7 0.1Z" fill="#4F5D6E"/><circle cx="7" cy="5" r="2.5" fill="#fff"/><circle cx="7" cy="5" r="1.15" fill="#4F5D6E"/></svg><div class="vid" style="top:54.8px"><svg width="117" height="66" viewBox="0 0 117 66"><path d="M16 23.3 L23.5 28 L16 32.6Z" fill="#606060"/><circle cx="97.8" cy="24" r="0.95" fill="#707070"/><circle cx="97.8" cy="28" r="0.95" fill="#707070"/><circle cx="97.8" cy="32" r="0.95" fill="#707070"/><rect x="13" y="46.5" width="92" height="3" rx="1.5" fill="#585858"/></svg></div><div class="body" style="left:13.0px;top:130.46px;font-size:13.3px;line-height:19.25px;color:#212B36;">Hi {{name}},

This is Rahul from
adsera.in.

Thank you for
using our services.
Please find your...</div></div>
<div class="card" style="left:922.34px;top:593.7px;height:324.6px"><div class="t" style="left:13.50px;top:19.92px;font-size:13.3px;line-height:16px;color:#26A35B;letter-spacing:-0.4px">utility_2</div><svg class="a" style="left:109.20px;top:22.70px" width="13.6" height="9.7" viewBox="0 0 14 10"><path d="M7 0.1 C3.4 0.1 1 2.9 0.1 5 C1 7.1 3.4 9.9 7 9.9 C10.6 9.9 13 7.1 13.9 5 C13 2.9 10.6 0.1 7 0.1Z" fill="#4F5D6E"/><circle cx="7" cy="5" r="2.5" fill="#fff"/><circle cx="7" cy="5" r="1.15" fill="#4F5D6E"/></svg><div class="img" style="top:54.8px"></div><div class="body" style="left:13.0px;top:130.46px;font-size:13.3px;line-height:19.25px;color:#212B36;">Hi {{name}},

This is Rahul from
adsera.in.

Thank you for
using our services.
Please find your...</div><div class="t" style="left:13.10px;top:291.94px;font-size:9.7px;line-height:12px;color:#637381;transform:scaleX(1.0032);transform-origin:0 0;">Team AdsEra</div></div>
<div class="card" style="left:1078.01px;top:593.7px;height:324.6px"><div class="t" style="left:13.50px;top:19.92px;font-size:13.3px;line-height:16px;color:#26A35B;letter-spacing:-0.4px">utility_o...</div><svg class="a" style="left:109.20px;top:22.70px" width="13.6" height="9.7" viewBox="0 0 14 10"><path d="M7 0.1 C3.4 0.1 1 2.9 0.1 5 C1 7.1 3.4 9.9 7 9.9 C10.6 9.9 13 7.1 13.9 5 C13 2.9 10.6 0.1 7 0.1Z" fill="#4F5D6E"/><circle cx="7" cy="5" r="2.5" fill="#fff"/><circle cx="7" cy="5" r="1.15" fill="#4F5D6E"/></svg><div class="body" style="left:13.0px;top:63.96px;font-size:13.3px;line-height:19.25px;color:#212B36;">Hi {{FIRSTNAME}},

This is Rahul from
adsera.in.

Thank you for
using our services.
Please find your...</div><div class="t" style="left:13.10px;top:225.44px;font-size:9.7px;line-height:12px;color:#637381;transform:scaleX(1.0032);transform-origin:0 0;">Team AdsEra</div></div>
<div class="card" style="left:1233.68px;top:593.7px;height:324.6px"><div class="t" style="left:13.50px;top:19.92px;font-size:13.3px;line-height:16px;color:#26A35B;letter-spacing:-0.4px">mar_flow</div><svg class="a" style="left:109.20px;top:22.70px" width="13.6" height="9.7" viewBox="0 0 14 10"><path d="M7 0.1 C3.4 0.1 1 2.9 0.1 5 C1 7.1 3.4 9.9 7 9.9 C10.6 9.9 13 7.1 13.9 5 C13 2.9 10.6 0.1 7 0.1Z" fill="#4F5D6E"/><circle cx="7" cy="5" r="2.5" fill="#fff"/><circle cx="7" cy="5" r="1.15" fill="#4F5D6E"/></svg><div class="img" style="top:54.8px"></div><div class="body" style="left:13.0px;top:130.46px;font-size:13.3px;line-height:19.25px;color:#212B36;">Hi {{name}},

Rahul here from
adsera.in! <svg class="em" style="vertical-align:-3.1px;margin-left:0.5px" width="15" height="15" viewBox="0 0 16 16"><defs><radialGradient id="SM4" cx="0.5" cy="0.3" r="0.75"><stop offset="0" stop-color="#FFF53A"/><stop offset="0.55" stop-color="#FDD21F"/><stop offset="1" stop-color="#F39A12"/></radialGradient></defs><circle cx="8" cy="8" r="7.6" fill="url(#SM4)"/><ellipse cx="5.3" cy="6.6" rx="1.05" ry="0.8" fill="#6E3A0C"/><ellipse cx="10.7" cy="6.6" rx="1.05" ry="0.8" fill="#6E3A0C"/><path d="M4.3 10 Q8 12.8 11.7 10" fill="none" stroke="#6E3A0C" stroke-width="1.2" stroke-linecap="round"/><ellipse cx="3.2" cy="9" rx="1.6" ry="1.1" fill="#F57A1F" opacity="0.6"/><ellipse cx="12.8" cy="9" rx="1.6" ry="1.1" fill="#F57A1F" opacity="0.6"/></svg>

Thank you for
choosing our
services! <svg class="em" style="vertical-align:-3.6px;margin-left:0.5px;margin-right:0.5px" width="16" height="16" viewBox="0 0 16 16"><path d="M0.3 16 L3.2 9.8 L6.6 12.8Z" fill="#F7A21A"/><path d="M1.6 14.6 L3.4 11 L5.2 12.6Z" fill="#FFF23A"/><path d="M0.2 8.8 L3 5.2 L6.8 5.4 L4.2 9.4Z" fill="#E8141E"/><path d="M6.6 15.4 L10.4 12.8 L10.6 9.2 L6.6 11.8Z" fill="#E8141E"/><ellipse cx="9.4" cy="6.6" rx="7.6" ry="2.8" transform="rotate(-45 9.4 6.6)" fill="#E4ECF2" stroke="#5E6B78" stroke-width="0.6"/><path d="M15.8 0.3 Q15.9 4.5 11.6 9 L13.5 10.5 Q16.5 6 15.8 0.3Z" fill="#3C7FD0" transform="translate(-1.6 -1.8)"/><path d="M4.3 11.6 Q5.5 9 9.6 5.2 L11 6.6 Q7.5 10.6 5.1 12.4Z" fill="#3F86D6" opacity="0.85"/><circle cx="10.9" cy="4.9" r="1.75" fill="#0D0D12" stroke="#C9303A" stroke-width="0.7"/></svg> We'r...</div><div class="t" style="left:13.10px;top:291.94px;font-size:9.7px;line-height:12px;color:#637381;transform:scaleX(1.0032);transform-origin:0 0;">Team AdsEra</div></div>
<div class="card" style="left:1389.35px;top:593.7px;height:324.6px"><div class="t" style="left:13.50px;top:19.92px;font-size:13.3px;line-height:16px;color:#26A35B;letter-spacing:-0.4px">mar_wa...</div><svg class="a" style="left:109.20px;top:22.70px" width="13.6" height="9.7" viewBox="0 0 14 10"><path d="M7 0.1 C3.4 0.1 1 2.9 0.1 5 C1 7.1 3.4 9.9 7 9.9 C10.6 9.9 13 7.1 13.9 5 C13 2.9 10.6 0.1 7 0.1Z" fill="#4F5D6E"/><circle cx="7" cy="5" r="2.5" fill="#fff"/><circle cx="7" cy="5" r="1.15" fill="#4F5D6E"/></svg><div class="body" style="left:12.7px;top:54.86px;font-size:13.3px;line-height:19.25px;color:#252E38;font-weight:bold;letter-spacing:-0.35px;">Stranger things
No, Harsha things
{{name}} Yes</div><div class="body" style="left:13.0px;top:121.96px;font-size:13.3px;line-height:19.25px;color:#212B36;">Hi {{name}},

Rahul here from
adsera.in! <svg class="em" style="vertical-align:-3.1px;margin-left:0.5px" width="15" height="15" viewBox="0 0 16 16"><defs><radialGradient id="SM5" cx="0.5" cy="0.3" r="0.75"><stop offset="0" stop-color="#FFF53A"/><stop offset="0.55" stop-color="#FDD21F"/><stop offset="1" stop-color="#F39A12"/></radialGradient></defs><circle cx="8" cy="8" r="7.6" fill="url(#SM5)"/><ellipse cx="5.3" cy="6.6" rx="1.05" ry="0.8" fill="#6E3A0C"/><ellipse cx="10.7" cy="6.6" rx="1.05" ry="0.8" fill="#6E3A0C"/><path d="M4.3 10 Q8 12.8 11.7 10" fill="none" stroke="#6E3A0C" stroke-width="1.2" stroke-linecap="round"/><ellipse cx="3.2" cy="9" rx="1.6" ry="1.1" fill="#F57A1F" opacity="0.6"/><ellipse cx="12.8" cy="9" rx="1.6" ry="1.1" fill="#F57A1F" opacity="0.6"/></svg>

Thank you for
choosing our
services! <svg class="em" style="vertical-align:-3.6px;margin-left:0.5px;margin-right:0.5px" width="16" height="16" viewBox="0 0 16 16"><path d="M0.3 16 L3.2 9.8 L6.6 12.8Z" fill="#F7A21A"/><path d="M1.6 14.6 L3.4 11 L5.2 12.6Z" fill="#FFF23A"/><path d="M0.2 8.8 L3 5.2 L6.8 5.4 L4.2 9.4Z" fill="#E8141E"/><path d="M6.6 15.4 L10.4 12.8 L10.6 9.2 L6.6 11.8Z" fill="#E8141E"/><ellipse cx="9.4" cy="6.6" rx="7.6" ry="2.8" transform="rotate(-45 9.4 6.6)" fill="#E4ECF2" stroke="#5E6B78" stroke-width="0.6"/><path d="M15.8 0.3 Q15.9 4.5 11.6 9 L13.5 10.5 Q16.5 6 15.8 0.3Z" fill="#3C7FD0" transform="translate(-1.6 -1.8)"/><path d="M4.3 11.6 Q5.5 9 9.6 5.2 L11 6.6 Q7.5 10.6 5.1 12.4Z" fill="#3F86D6" opacity="0.85"/><circle cx="10.9" cy="4.9" r="1.75" fill="#0D0D12" stroke="#C9303A" stroke-width="0.7"/></svg> We'r...</div><div class="t" style="left:13.10px;top:283.44px;font-size:9.7px;line-height:12px;color:#637381;transform:scaleX(1.0032);transform-origin:0 0;">Team AdsEra</div></div>
<div class="card" style="left:611.00px;top:930.1px;height:324.6px"><div class="t" style="left:13.50px;top:19.92px;font-size:13.3px;line-height:16px;color:#26A35B;letter-spacing:-0.4px">mar_10</div><svg class="a" style="left:109.20px;top:22.70px" width="13.6" height="9.7" viewBox="0 0 14 10"><path d="M7 0.1 C3.4 0.1 1 2.9 0.1 5 C1 7.1 3.4 9.9 7 9.9 C10.6 9.9 13 7.1 13.9 5 C13 2.9 10.6 0.1 7 0.1Z" fill="#4F5D6E"/><circle cx="7" cy="5" r="2.5" fill="#fff"/><circle cx="7" cy="5" r="1.15" fill="#4F5D6E"/></svg></div>
<div class="card" style="left:766.67px;top:930.1px;height:324.6px"><div class="t" style="left:13.50px;top:19.92px;font-size:13.3px;line-height:16px;color:#26A35B;letter-spacing:-0.4px">mar_9</div><svg class="a" style="left:109.20px;top:22.70px" width="13.6" height="9.7" viewBox="0 0 14 10"><path d="M7 0.1 C3.4 0.1 1 2.9 0.1 5 C1 7.1 3.4 9.9 7 9.9 C10.6 9.9 13 7.1 13.9 5 C13 2.9 10.6 0.1 7 0.1Z" fill="#4F5D6E"/><circle cx="7" cy="5" r="2.5" fill="#fff"/><circle cx="7" cy="5" r="1.15" fill="#4F5D6E"/></svg></div>
<div class="card" style="left:922.34px;top:930.1px;height:324.6px"><div class="t" style="left:13.50px;top:19.92px;font-size:13.3px;line-height:16px;color:#26A35B;letter-spacing:-0.4px">mar_8_...</div><svg class="a" style="left:109.20px;top:22.70px" width="13.6" height="9.7" viewBox="0 0 14 10"><path d="M7 0.1 C3.4 0.1 1 2.9 0.1 5 C1 7.1 3.4 9.9 7 9.9 C10.6 9.9 13 7.1 13.9 5 C13 2.9 10.6 0.1 7 0.1Z" fill="#4F5D6E"/><circle cx="7" cy="5" r="2.5" fill="#fff"/><circle cx="7" cy="5" r="1.15" fill="#4F5D6E"/></svg></div>
<div class="card" style="left:1078.01px;top:930.1px;height:324.6px"><div class="t" style="left:13.50px;top:19.92px;font-size:13.3px;line-height:16px;color:#26A35B;letter-spacing:-0.4px">mar_sev...</div><svg class="a" style="left:109.20px;top:22.70px" width="13.6" height="9.7" viewBox="0 0 14 10"><path d="M7 0.1 C3.4 0.1 1 2.9 0.1 5 C1 7.1 3.4 9.9 7 9.9 C10.6 9.9 13 7.1 13.9 5 C13 2.9 10.6 0.1 7 0.1Z" fill="#4F5D6E"/><circle cx="7" cy="5" r="2.5" fill="#fff"/><circle cx="7" cy="5" r="1.15" fill="#4F5D6E"/></svg></div>
<div class="card" style="left:1233.68px;top:930.1px;height:324.6px"><div class="t" style="left:13.50px;top:19.92px;font-size:13.3px;line-height:16px;color:#26A35B;letter-spacing:-0.4px">mar_six...</div><svg class="a" style="left:109.20px;top:22.70px" width="13.6" height="9.7" viewBox="0 0 14 10"><path d="M7 0.1 C3.4 0.1 1 2.9 0.1 5 C1 7.1 3.4 9.9 7 9.9 C10.6 9.9 13 7.1 13.9 5 C13 2.9 10.6 0.1 7 0.1Z" fill="#4F5D6E"/><circle cx="7" cy="5" r="2.5" fill="#fff"/><circle cx="7" cy="5" r="1.15" fill="#4F5D6E"/></svg></div>
<div class="card" style="left:1389.35px;top:930.1px;height:324.6px"><div class="t" style="left:13.50px;top:19.92px;font-size:13.3px;line-height:16px;color:#26A35B;letter-spacing:-0.4px">mar_five</div><svg class="a" style="left:109.20px;top:22.70px" width="13.6" height="9.7" viewBox="0 0 14 10"><path d="M7 0.1 C3.4 0.1 1 2.9 0.1 5 C1 7.1 3.4 9.9 7 9.9 C10.6 9.9 13 7.1 13.9 5 C13 2.9 10.6 0.1 7 0.1Z" fill="#4F5D6E"/><circle cx="7" cy="5" r="2.5" fill="#fff"/><circle cx="7" cy="5" r="1.15" fill="#4F5D6E"/></svg></div>
</body></html>
